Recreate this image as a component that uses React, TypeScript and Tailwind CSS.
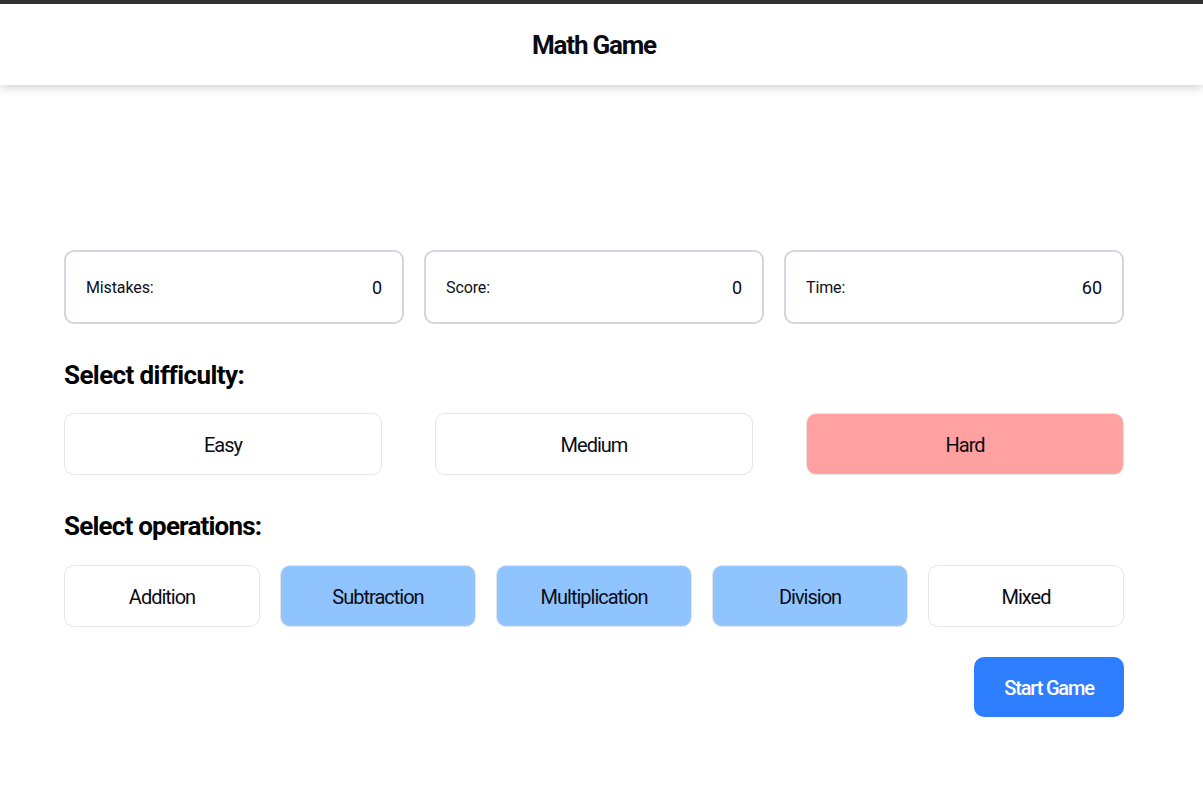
const stats = [
  { label: 'Mistakes:', value: '0' },
  { label: 'Score:', value: '0' },
  { label: 'Time:', value: '60' },
]

const difficulties = [
  { label: 'Easy', active: false },
  { label: 'Medium', active: false },
  { label: 'Hard', active: true },
]

const operations = [
  { label: 'Addition', active: false },
  { label: 'Subtraction', active: true },
  { label: 'Multiplication', active: true },
  { label: 'Division', active: true },
  { label: 'Mixed', active: false },
]

export default function App() {
  return (
    <div className="min-h-[797px] w-[1188px] bg-white font-['Roboto',sans-serif] text-[#0b0b14]">
      <div className="h-1 w-[1203px] bg-[#333336]" />
      <header className="flex h-[81px] w-[1203px] items-center bg-white shadow-[0_2px_10px_rgba(0,0,0,0.2)]">
        <h1 className="w-[1188px] pt-0.5 text-center text-[26px] font-bold tracking-[-1.2px]">Math Game</h1>
      </header>

      <main className="px-16 pt-[165px]">
        <div className="grid grid-cols-3 gap-5">
          {stats.map((s) => (
            <div
              key={s.label}
              className="flex h-[74px] items-center justify-between rounded-[10px] border-2 border-[#d3d5e1] px-5 pt-0.5"
            >
              <span className="text-base tracking-[-0.12px] text-[#0b1020]">{s.label}</span>
              <span className="text-lg tracking-[0px]">{s.value}</span>
            </div>
          ))}
        </div>

        <h2 className="mt-[33px] h-9 text-[26px] font-bold leading-9 tracking-[-0.6px] text-black">Select difficulty:</h2>
        <div className="mt-[20px] flex justify-between">
          {difficulties.map((d) => (
            <button
              key={d.label}
              className={`h-[62px] w-[318px] rounded-[10px] border border-[#e5e6ea] pt-0.5 text-xl tracking-[-1px] ${
                d.active ? 'bg-[#ffa1a1]' : 'bg-white'
              }`}
            >
              {d.label}
            </button>
          ))}
        </div>

        <h2 className="mt-[33px] h-9 text-[26px] font-bold leading-9 tracking-[-0.8px] text-black">Select operations:</h2>
        <div className="mt-[21px] grid grid-cols-5 gap-5">
          {operations.map((o) => (
            <button
              key={o.label}
              className={`h-[62px] rounded-[10px] border border-[#e5e6ea] pt-0.5 text-xl tracking-[-1px] ${
                o.active ? 'bg-[#90c4ff]' : 'bg-white'
              }`}
            >
              {o.label}
            </button>
          ))}
        </div>

        <div className="mt-[30px] flex justify-end">
          <button className="h-[60px] w-[150px] rounded-[10px] bg-[#2e7fff] pt-0.5 text-xl font-medium tracking-[-1.2px] text-white">
            Start Game
          </button>
        </div>
      </main>
    </div>
  )
}
